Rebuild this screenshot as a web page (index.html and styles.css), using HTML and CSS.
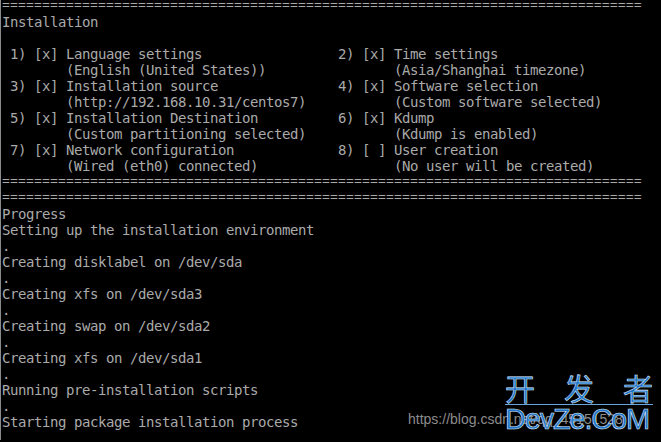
FILE: index.html
```html
<html>
<head>
<title>Installation</title>
<meta name="viewport" content="width=device-width, initial-scale=1">
<link rel="stylesheet" href="styles.css">
</head>
<body>
<div class="screen">
<pre class="console"><span class="rule">================================================================================</span>
Installation

 1) [x] Language settings                 2) [x] Time settings
        (English (United States))                (Asia/Shanghai timezone)
 3) [x] Installation source               4) [x] Software selection
        (http://192.168.10.31/centos7)           (Custom software selected)
 5) [x] Installation Destination          6) [x] Kdump
        (Custom partitioning selected)           (Kdump is enabled)
 7) [x] Network configuration             8) [ ] User creation
        (Wired (eth0) connected)                 (No user will be created)
<span class="rule">================================================================================</span>
<span class="rule">================================================================================</span>
Progress
Setting up the installation environment
.
Creating disklabel on /dev/sda
.
Creating xfs on /dev/sda3
.
Creating swap on /dev/sda2
.
Creating xfs on /dev/sda1
.
Running pre-installation scripts
.
Starting package installation process</pre>
<div class="source">https://blog.csdn.net/qq_45151528</div>
<div class="mark">
  <div class="mark-cn"><span>开</span><span>发</span><span>者</span></div>
  <div class="mark-en">DevZe.CoM</div>
</div>
</div>
</body>
</html>
```
FILE: styles.css
```css
html, body { margin: 0; padding: 0; background: #000; }
body { width: 661px; height: 442px; overflow: hidden; }
.screen { position: relative; height: 442px; border-left: 1px solid #8a8a8a; box-sizing: border-box; }
.console {
  margin: -2px 0 0 1px;
  font-family: "DejaVu Sans Mono", monospace;
  font-size: 14px;
  letter-spacing: -0.43px;
  line-height: 16px;
  color: #aaaaaa;
}
.rule {
  font-family: "Liberation Mono", monospace;
  font-size: 13.333px;
  letter-spacing: 0;
}
.source {
  position: absolute; left: 407px; top: 413px;
  font-family: "Liberation Sans", Arial, sans-serif;
  font-size: 14px; color: #8c8c8c;
}
.mark { position: absolute; left: 504px; top: 372px; width: 148px; }
.mark-cn {
  display: flex; justify-content: space-between;
  font-family: "Noto Sans CJK SC", sans-serif;
  font-size: 30px; line-height: 34px; color: #1f72c8;
  -webkit-text-stroke: 0.6px #dbe9f7;
  border-bottom: 1px solid #6aa6de;
}
.mark-en {
  font-family: "Liberation Sans", Arial, sans-serif;
  font-size: 29px; line-height: 28px; color: #1f72c8;
  letter-spacing: -1.2px;
  -webkit-text-stroke: 0.6px #dbe9f7;
  white-space: nowrap;
}
```
